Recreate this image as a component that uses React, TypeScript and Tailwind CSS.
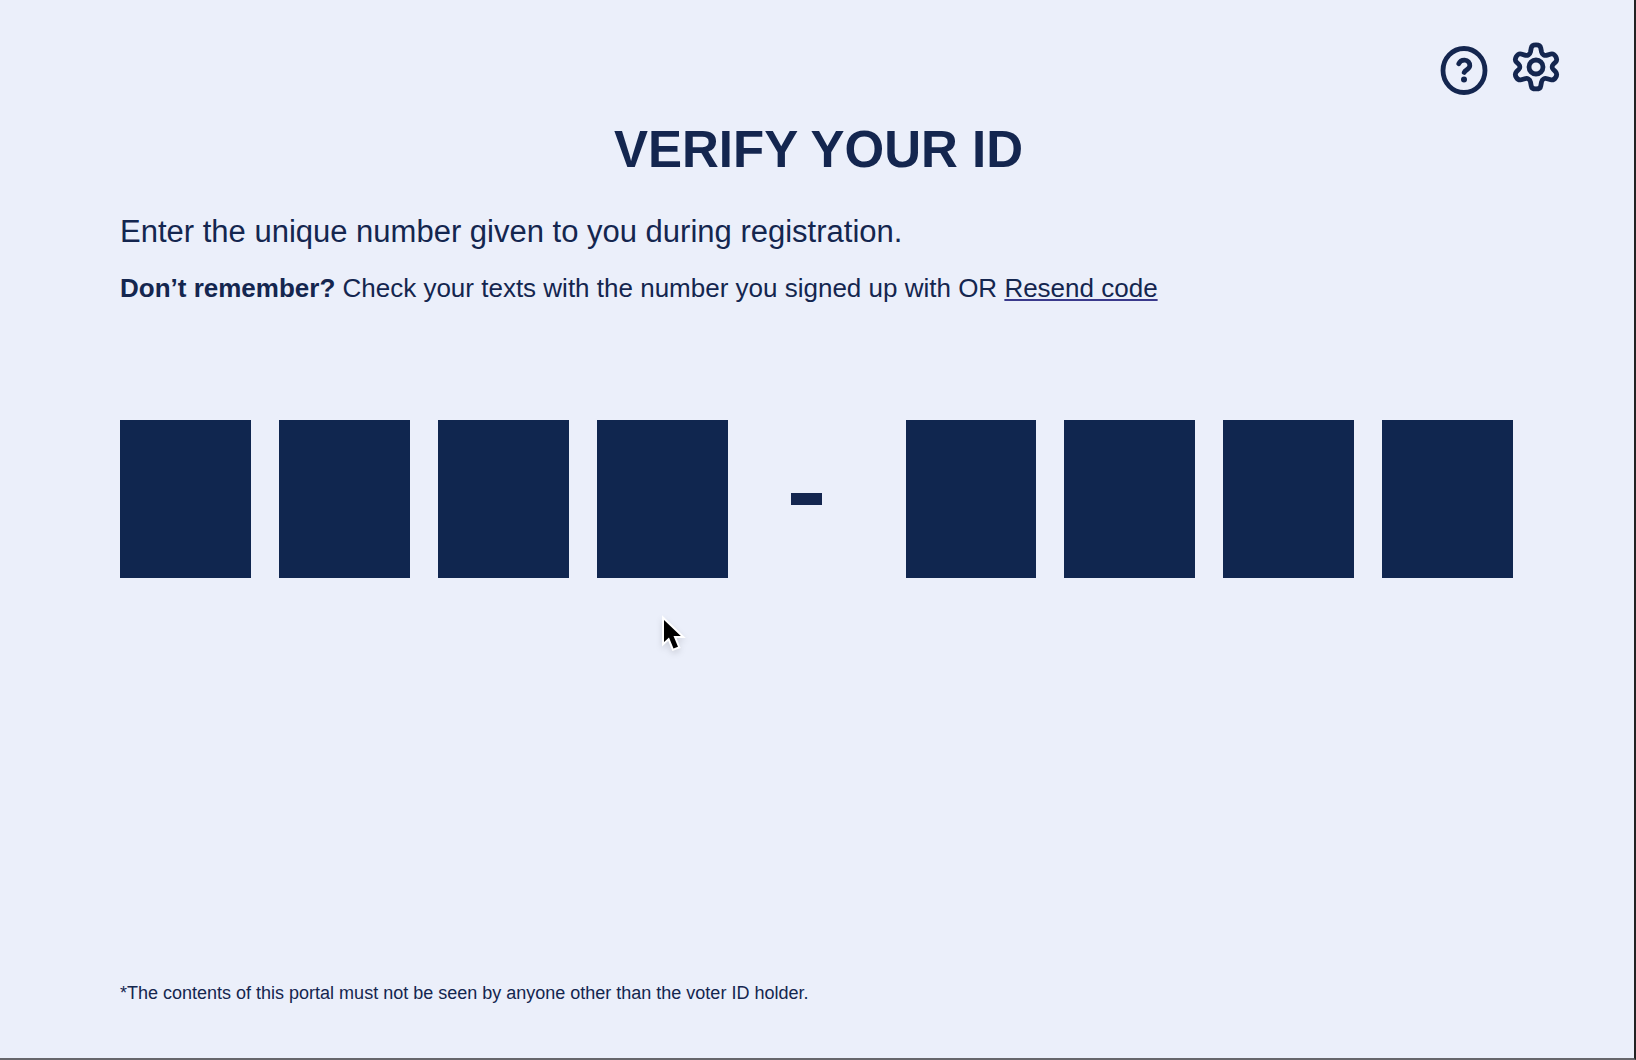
import { useRef, useState } from "react";

const SLOTS = [0, 1, 2, 3];

function HelpIcon() {
  return (
    <svg viewBox="0 0 48 50" className="h-[50px] w-12" fill="none" stroke="currentColor" strokeWidth="4.8" strokeLinecap="round" aria-hidden="true">
      <ellipse cx="24" cy="24.5" rx="21" ry="22" />
      <path d="M18.8 17.7C19.8 15.2 22 14 24.7 14.1C27.8 14.2 30 16.6 29.8 19.8C29.7 23 25.4 23.8 24.2 26.4" />
      <circle cx="24" cy="33.6" r="3" fill="currentColor" stroke="none" />
    </svg>
  );
}

function GearIcon() {
  return (
    <svg viewBox="0 0 48 50" className="h-[50px] w-12" fill="none" stroke="currentColor" strokeWidth="4.8" strokeLinecap="round" strokeLinejoin="round" aria-hidden="true">
      <path d="M19.2 6.2C19.8 1.8 28.2 1.8 28.8 6.2L29.5 9.8C30.2 12.6 32.4 14 35.2 13.1L38.8 12C42.6 11 46.4 17 43.6 20L41.2 22.4C39.8 23.8 39.8 26 41.2 27.4L43.6 29.8C46.4 33 42.6 38.8 38.8 37.8L35.2 36.7C32.4 35.8 30.2 37.2 29.5 40L28.8 43.8C28.2 48 19.8 48 19.2 43.8L18.5 40C17.8 37.2 15.6 35.8 12.8 36.7L9.2 37.8C5.4 38.8 1.6 33 4.4 29.8L6.8 27.4C8.2 26 8.2 23.8 6.8 22.4L4.4 20C1.6 17 5.4 11 9.2 12L12.8 13.1C15.6 14 17.8 12.6 18.5 9.8Z" />
      <circle cx="24" cy="25" r="7" />
    </svg>
  );
}

function Pointer() {
  return (
    <svg viewBox="0 0 24 36" className="pointer-events-none absolute top-[39px] left-[540px] h-9 w-6 overflow-visible drop-shadow-md" aria-hidden="true">
      <path
        d="M4 3V25L9 20.5L13.5 31.5L18 29.8L13.5 19H20.8Z"
        fill="#000"
        stroke="#fff"
        strokeWidth="4"
        paintOrder="stroke"
      />
    </svg>
  );
}

export default function App() {
  const [digits, setDigits] = useState<string[]>(Array(8).fill(""));
  const boxes = useRef<(HTMLInputElement | null)[]>([]);

  const change = (index: number, value: string) => {
    setDigits((old) => old.map((d, i) => (i === index ? value : d)));
    if (value) boxes.current[index + 1]?.focus();
  };

  const group = (offset: number) => (
    <div className="flex flex-1 gap-7">
      {SLOTS.map((slot) => {
        const index = offset + slot;
        return (
          <input
            key={index}
            ref={(el) => {
              boxes.current[index] = el;
            }}
            aria-label={`Digit ${index + 1}`}
            inputMode="numeric"
            maxLength={1}
            value={digits[index]}
            onChange={(e) => change(index, e.target.value)}
            className="h-[158px] w-full min-w-0 flex-1 bg-[#10264f] text-center text-7xl font-bold text-white outline-none"
          />
        );
      })}
    </div>
  );

  return (
    <div className="flex min-h-screen flex-col border-r-2 border-b-2 border-r-[#222222] border-b-[#66666b] bg-[#ebeffa] font-['Liberation_Sans',Arial,sans-serif] text-[#14264f]">
      <header className="flex h-[120px] items-start justify-end gap-6 pt-[42px] pr-[74px]">
        <button type="button" aria-label="Help" className="mt-1">
          <HelpIcon />
        </button>
        <button type="button" aria-label="Settings">
          <GearIcon />
        </button>
      </header>
      <main className="flex flex-1 flex-col pr-[121px] pl-[120px]">
        <h1 className="pl-1 text-center text-[51px] leading-[60px] font-bold">VERIFY YOUR ID</h1>
        <p className="mt-8 text-[31px] leading-10">Enter the unique number given to you during registration.</p>
        <p className="mt-5 text-[26px] leading-8">
          <strong>Don’t remember?</strong> Check your texts with the number you signed up with OR{" "}
          <a href="#resend" className="underline decoration-[#3a3a8c] decoration-2 underline-offset-2">
            Resend code
          </a>
        </p>
        <form className="mt-[116px] flex items-center" onSubmit={(e) => e.preventDefault()}>
          {group(0)}
          <div className="flex w-[178px] justify-center pr-5">
            <span className="h-3 w-[31px] bg-[#14264f]" />
          </div>
          {group(4)}
        </form>
        <div className="relative flex-1">
          <Pointer />
        </div>
        <footer className="pb-[53px] text-[18px] leading-6">
          *The contents of this portal must not be seen by anyone other than the voter ID holder.
        </footer>
      </main>
    </div>
  );
}
